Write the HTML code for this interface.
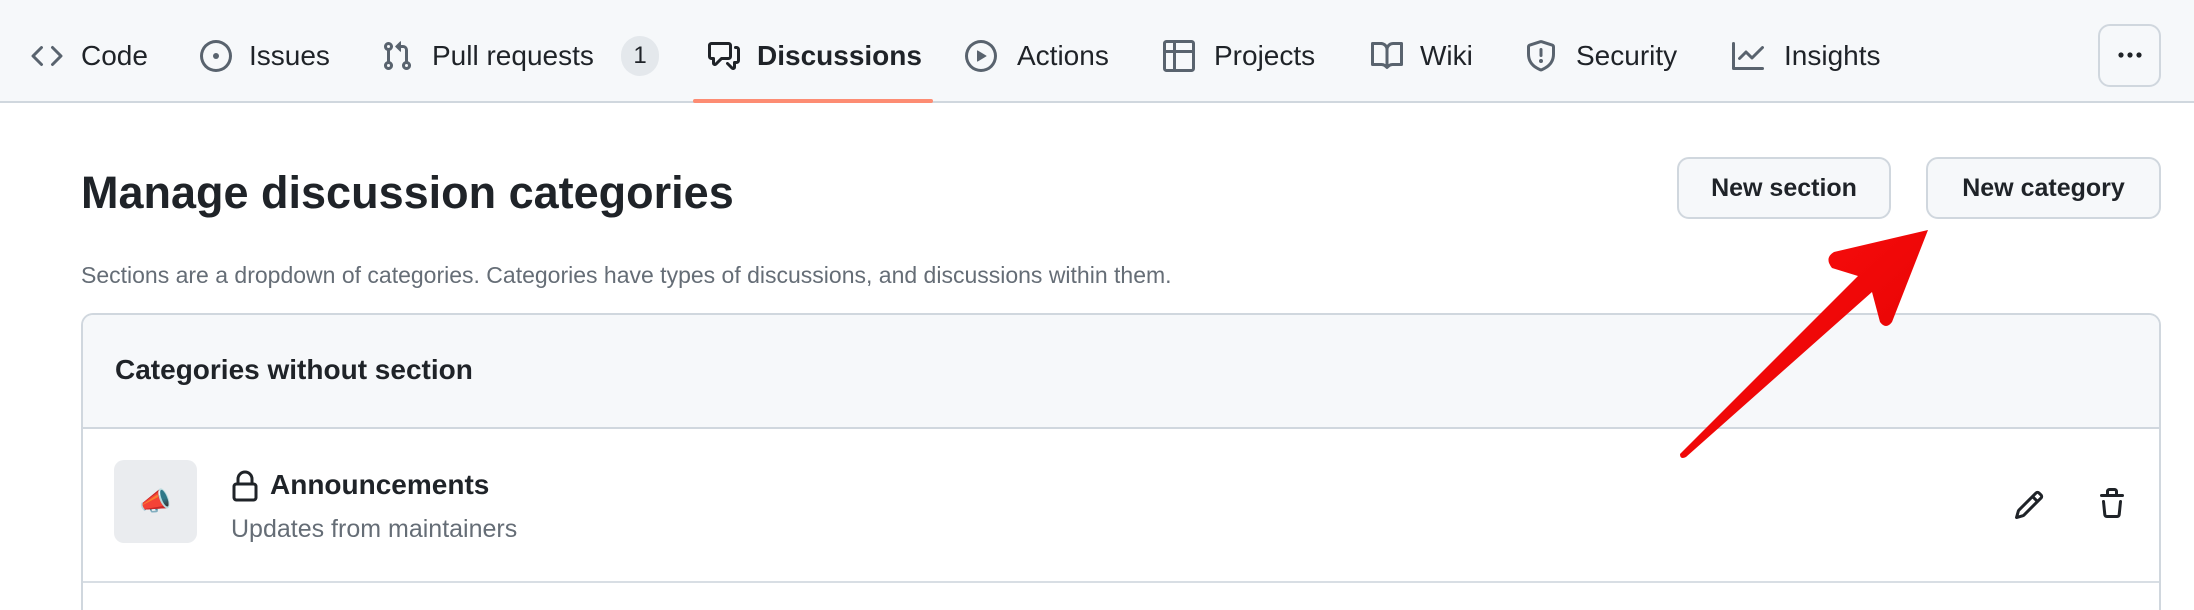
<!DOCTYPE html>
<html><head><meta charset="utf-8"><style>
*{margin:0;padding:0;box-sizing:border-box}
html,body{width:2194px;height:610px;overflow:hidden}
body{background:#fff;font-family:"Liberation Sans",Arial,sans-serif;color:#1f2328;position:relative}
.nav{position:absolute;left:0;top:0;width:2194px;height:103px;background:#f6f8fa;border-bottom:2px solid #d0d7de}
.a{position:absolute}
.t{position:absolute;font-size:28px;line-height:32px;top:40px;color:#1f2328}
svg.i{position:absolute;top:40px;width:32px;height:32px;fill:#59636e}
.btn{position:absolute;background:#f6f8fa;border:2px solid #d0d7de;border-radius:12px;font-size:25px;font-weight:bold;color:#1f2328;text-align:center;line-height:58px}
</style></head><body>
<div class="nav">
<svg class="i" style="left:31px" viewBox="0 0 16 16"><path d="m11.28 3.22 4.25 4.250a.75.75 0 0 1 0 1.06l-4.25 4.25a.749.749 0 0 1-1.06-1.06L13.94 8l-3.72-3.72a.749.749 0 0 1 1.06-1.06Zm-6.56 0a.75.75 0 0 1 1.06 1.06L2.06 8l3.72 3.720a.749.749 0 0 1-1.06 1.06L.47 8.53a.75.75 0 0 1 0-1.06Z"/></svg>
<div class="t" style="left:81px">Code</div>
<svg class="i" style="left:200px" viewBox="0 0 16 16"><path d="M8 9.5a1.5 1.5 0 1 0 0-3 1.5 1.5 0 0 0 0 3Z"/><path d="M8 0a8 8 0 1 1 0 16A8 8 0 0 1 8 0ZM1.5 8a6.5 6.5 0 1 0 13 0 6.5 6.5 0 0 0-13 0Z"/></svg>
<div class="t" style="left:249px">Issues</div>
<svg class="i" style="left:381px" viewBox="0 0 16 16"><path d="M1.5 3.25a2.25 2.25 0 1 1 3 2.122v5.256a2.251 2.251 0 1 1-1.5 0V5.372A2.25 2.25 0 0 1 1.5 3.25Zm5.677-.177L9.573.677A.25.25 0 0 1 10 .854V2.5h1A2.5 2.5 0 0 1 13.5 5v5.628a2.251 2.251 0 1 1-1.5 0V5a1 1 0 0 0-1-1h-1v1.646a.25.25 0 0 1-.427.177L7.177 3.427a.25.25 0 0 1 0-.354ZM3.75 2.5a.75.75 0 1 0 0 1.5.75.75 0 0 0 0-1.5Zm0 9.5a.75.75 0 1 0 0 1.5.75.75 0 0 0 0-1.5Zm8.25.75a.75.75 0 1 0 1.5 0 .75.75 0 0 0-1.5 0Z"/></svg>
<div class="t" style="left:432px">Pull requests</div>
<div class="a" style="left:621px;top:36px;width:38px;height:40px;border-radius:20px;background:#e4e8ec;font-size:24px;line-height:40px;text-align:center">1</div>
<svg class="i" style="left:708px;fill:#1f2328" viewBox="0 0 16 16"><path d="M1.75 1h8.5c.966 0 1.75.784 1.75 1.75v5.5A1.75 1.75 0 0 1 10.25 10H7.061l-2.574 2.573A1.458 1.458 0 0 1 2 11.543V10h-.25A1.75 1.75 0 0 1 0 8.25v-5.5C0 1.784.784 1 1.75 1ZM1.5 2.75v5.5c0 .138.112.25.25.25h1a.75.75 0 0 1 .75.75v2.19l2.72-2.72a.749.749 0 0 1 .53-.22h3.5a.25.25 0 0 0 .25-.25v-5.5a.25.25 0 0 0-.25-.25h-8.5a.25.25 0 0 0-.25.25Zm13 2a.25.25 0 0 0-.25-.25h-.5a.75.75 0 0 1 0-1.5h.5c.966 0 1.75.784 1.75 1.75v5.5A1.75 1.75 0 0 1 14.25 12H14v1.543a1.458 1.458 0 0 1-2.487 1.03L9.220 12.28a.749.749 0 0 1 .326-1.275.749.749 0 0 1 .734.215l2.22 2.22v-2.19a.75.75 0 0 1 .75-.75h1a.25.25 0 0 0 .25-.25Z"/></svg>
<div class="t" style="left:757px;font-weight:bold">Discussions</div>
<div class="a" style="left:693px;top:99px;width:240px;height:4px;background:#fd8c73;border-radius:2px"></div>
<svg class="i" style="left:965px" viewBox="0 0 16 16"><path d="M8 0a8 8 0 1 1 0 16A8 8 0 0 1 8 0ZM1.5 8a6.5 6.5 0 1 0 13 0 6.5 6.5 0 0 0-13 0Zm4.879-2.773 4.264 2.559a.25.25 0 0 1 0 .428l-4.264 2.559A.25.25 0 0 1 6 10.559V5.442a.25.25 0 0 1 .379-.215Z"/></svg>
<div class="t" style="left:1017px">Actions</div>
<svg class="i" style="left:1163px" viewBox="0 0 16 16"><path d="M0 1.75C0 .784.784 0 1.75 0h12.5C15.216 0 16 .784 16 1.75v12.5A1.75 1.75 0 0 1 14.25 16H1.75A1.75 1.75 0 0 1 0 14.25ZM6.5 6.5v8h7.75a.25.25 0 0 0 .25-.25V6.5Zm8-1.5V1.75a.25.25 0 0 0-.25-.25H6.5V5Zm-13 1.5v7.75c0 .138.112.25.25.25H5v-8ZM5 5V1.5H1.75a.25.25 0 0 0-.25.25V5Z"/></svg>
<div class="t" style="left:1214px">Projects</div>
<svg class="i" style="left:1371px" viewBox="0 0 16 16"><path d="M0 1.75A.75.75 0 0 1 .75 1h4.253c1.227 0 2.317.59 3 1.501A3.743 3.743 0 0 1 11.006 1h4.245a.75.75 0 0 1 .75.75v10.5a.75.75 0 0 1-.75.75h-4.507a2.25 2.25 0 0 0-1.591.659l-.622.621a.75.75 0 0 1-1.06 0l-.622-.621A2.25 2.25 0 0 0 5.258 13H.75a.75.75 0 0 1-.75-.75Zm7.251 10.324.004-5.073-.002-2.253A2.25 2.25 0 0 0 5.003 2.5H1.5v9h3.757a3.75 3.75 0 0 1 1.994.574ZM8.755 4.750l-.004 7.322a3.752 3.752 0 0 1 1.992-.572H14.5v-9h-3.495a2.25 2.25 0 0 0-2.25 2.25Z"/></svg>
<div class="t" style="left:1420px">Wiki</div>
<svg class="i" style="left:1525px" viewBox="0 0 16 16"><path d="M7.467.133a1.748 1.748 0 0 1 1.066 0l5.25 1.68A1.75 1.75 0 0 1 15 3.48V7c0 1.566-.32 3.182-1.303 4.682-.983 1.498-2.585 2.813-5.032 3.855a1.697 1.697 0 0 1-1.33 0c-2.447-1.042-4.049-2.357-5.032-3.855C1.32 10.182 1 8.566 1 7V3.48a1.755 1.755 0 0 1 1.217-1.667Zm.61 1.429a.25.25 0 0 0-.153 0l-5.25 1.68a.25.25 0 0 0-.174.238V7c0 1.358.275 2.666 1.057 3.86.784 1.194 2.121 2.34 4.366 3.297a.196.196 0 0 0 .154 0c2.245-.956 3.582-2.104 4.366-3.298C13.225 9.666 13.5 8.36 13.5 7V3.48a.251.251 0 0 0-.174-.237l-5.25-1.68ZM8.75 4.75v3a.75.75 0 0 1-1.5 0v-3a.75.75 0 0 1 1.5 0ZM9 10.5a1 1 0 1 1-2 0 1 1 0 0 1 2 0Z"/></svg>
<div class="t" style="left:1576px">Security</div>
<svg class="i" style="left:1732px" viewBox="0 0 16 16"><path d="M1.5 1.75V13.5h13.75a.75.75 0 0 1 0 1.5H.75a.75.75 0 0 1-.75-.75V1.75a.75.75 0 0 1 1.5 0Zm14.28 2.53-5.25 5.25a.75.75 0 0 1-1.06 0L7 7.06 4.28 9.78a.751.751 0 0 1-1.042-.018.751.751 0 0 1-.018-1.042l3.25-3.25a.75.75 0 0 1 1.06 0L10 7.94l4.72-4.72a.751.751 0 0 1 1.042.018.751.751 0 0 1 .018 1.042Z"/></svg>
<div class="t" style="left:1784px">Insights</div>
<div class="btn" style="left:2098px;top:24px;width:63px;height:63px">
<svg width="24" height="6" viewBox="0 0 24 6" style="position:absolute;left:18px;top:26px"><circle cx="3" cy="3" r="2.6" fill="#1f2328"/><circle cx="12" cy="3" r="2.6" fill="#1f2328"/><circle cx="21" cy="3" r="2.6" fill="#1f2328"/></svg>
</div>
</div>

<div class="a" style="left:81px;top:167px;font-size:45px;font-weight:bold;line-height:52px">Manage discussion categories</div>
<div class="btn" style="left:1677px;top:157px;width:214px;height:62px">New section</div>
<div class="btn" style="left:1926px;top:157px;width:235px;height:62px">New category</div>
<div class="a" style="left:81px;top:262px;font-size:23px;color:#656d76">Sections are a dropdown of categories. Categories have types of discussions, and discussions within them.</div>

<div class="a" style="left:81px;top:313px;width:2080px;height:297px;border:2px solid #d0d7de;border-bottom:none;border-radius:12px 12px 0 0;overflow:hidden">
 <div style="height:114px;background:#f6f8fa;border-bottom:2px solid #d0d7de"></div>
 <div style="position:absolute;top:266px;left:0;right:0;height:2px;background:#d8dee4"></div>
</div>
<div class="a" style="left:115px;top:354px;font-size:28px;font-weight:bold">Categories without section</div>
<div class="a" style="left:114px;top:460px;width:83px;height:83px;border-radius:10px;background:#eaecef;text-align:center;line-height:83px;font-size:26px">📣</div>
<svg class="a" style="left:232px;top:470px" width="26" height="32" viewBox="0 0 13 16"><path d="M3 7V4.5a3.5 3.5 0 0 1 7 0V7" fill="none" stroke="#1f2328" stroke-width="1.5"/><rect x="1" y="7" width="11" height="8" rx="1.2" fill="none" stroke="#1f2328" stroke-width="1.5"/></svg>
<div class="a" style="left:270px;top:469px;font-size:28px;font-weight:bold">Announcements</div>
<div class="a" style="left:231px;top:515px;font-size:25px;color:#656d76">Updates from maintainers</div>
<svg class="a" style="left:2013px;top:489px" width="32" height="32" viewBox="0 0 16 16"><path fill="#1f2328" d="M11.013 1.427a1.75 1.75 0 0 1 2.474 0l1.086 1.086a1.75 1.75 0 0 1 0 2.474l-8.61 8.61c-.21.21-.47.364-.756.445l-3.251.93a.75.75 0 0 1-.927-.928l.929-3.250c.081-.286.235-.547.445-.758l8.61-8.61Zm.176 4.823L9.75 4.81l-6.286 6.287a.253.253 0 0 0-.064.108l-.558 1.953 1.953-.558a.253.253 0 0 0 .108-.064Zm1.238-3.763a.25.25 0 0 0-.354 0L10.811 3.75l1.439 1.44 1.263-1.263a.25.25 0 0 0 0-.354Z"/></svg>
<svg class="a" style="left:2096px;top:488px" width="32" height="32" viewBox="0 0 16 16"><path fill="#1f2328" d="M11 1.75V3h2.25a.75.75 0 0 1 0 1.5H2.75a.75.75 0 0 1 0-1.5H5V1.750C5 .784 5.784 0 6.75 0h2.5C10.216 0 11 .784 11 1.75ZM4.496 6.675l.66 6.6a.25.25 0 0 0 .249.225h5.19a.25.25 0 0 0 .249-.225l.66-6.6a.75.75 0 0 1 1.492.149l-.66 6.6A1.748 1.748 0 0 1 10.595 15h-5.19a1.75 1.75 0 0 1-1.741-1.575l-.66-6.6a.75.75 0 1 1 1.492-.15ZM6.5 1.75V3h3V1.75a.25.25 0 0 0-.25-.25h-2.5a.25.25 0 0 0-.25.25Z"/></svg>

<svg class="a" style="left:0;top:0" width="2194" height="610">
<defs><linearGradient id="g" x1="0" y1="0" x2="1" y2="1"><stop offset="0" stop-color="#ff1010"/><stop offset="1" stop-color="#e00000"/></linearGradient></defs>
<path d="M1928 230 L1834 252 Q1824 258 1832 268 L1858 276 L1680 454 Q1680 460 1686 457 L1872 292 L1880 322 Q1886 330 1892 322 Z" fill="url(#g)"/>
</svg>
</body></html>
